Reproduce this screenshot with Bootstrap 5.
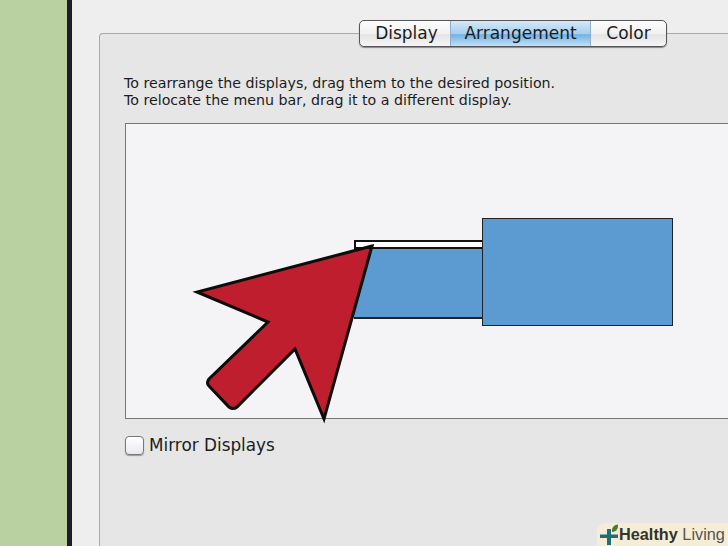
<!DOCTYPE html>
<html lang="en">
<head>
    <meta charset="UTF-8">
    <title>Displays - Arrangement</title>
    <link href="https://cdn.jsdelivr.net/npm/bootstrap@5.3.3/dist/css/bootstrap.min.css" rel="stylesheet">
    <style>
        html, body { height: 100%; overflow: hidden; }
        body { background: #b9d1a0; font-family: "DejaVu Sans", sans-serif; color: #1c1c20; }
        .shot { width: 728px; height: 546px; overflow: hidden; position: relative; }
        .green-side { width: 67px; background: #b9d1a0; }
        .dark-edge { width: 5px; background: #1f1b2a; }
        .prefs-window { width: 900px; background: #eeeeef; padding: 33px 0 0 27px; }
        .prefs-panel { background: #e6e6e7; border: 1px solid #a9a9a9; border-bottom: 0; border-right: 0; border-radius: 4px 0 0 0; height: 600px; padding-left: 24px; }
        .seg-tabs { width: 308px; height: 27px; margin: -14px 0 0 235px; border: 1px solid #55555a; border-radius: 5px; background: linear-gradient(#fdfdfd, #f1f1f1 50%, #e4e4e4 55%, #f6f6f6); box-shadow: 0 1px 1px #888; overflow: hidden; font-size: 17px; line-height: 25px; }
        .seg-tabs > div { text-align: center; }
        .seg-display { width: 90px; padding-left: 3px; }
        .seg-arrange { width: 141px; background: linear-gradient(#d6e8f6, #a6cff0 50%, #72b2e4 55%, #c2e0f6); border-left: 1px solid #8fb0cc; border-right: 1px solid #8fb0cc; }
        .seg-color { flex: 1; }
        .hint-text { margin: 28px 0 0 0; font-size: 14.2px; line-height: 17px; height: 36px; white-space: nowrap; }
        .arrange-canvas { position: relative; width: 700px; height: 296px; margin: 12px 0 0 1px; background: #f4f4f6; border: 1px solid #77777a; }
        .menu-strip { position: absolute; left: 228px; top: 116px; width: 129px; height: 9px; background: #fff; border: 2px solid #111; border-right: 0; }
        .screen-small, .screen-big { position: absolute; background: #5c9bd1; border: 1px solid #222; }
        .screen-small { left: 228px; top: 123px; width: 129px; height: 72px; border-width: 2px 0 2px 0; }
        .screen-big { left: 356px; top: 94px; width: 191px; height: 108px; }
        .mirror-row { margin: 16px 0 0 0; font-size: 16.85px; line-height: 20px; gap: 5px; }
        .mirror-box { width: 19px; height: 19px; margin-left: 1px; border: 1px solid #77777c; border-radius: 4px; background: linear-gradient(#fff, #e8eaf0); box-shadow: 0 1px 1px #999; }
        .big-arrow { position: absolute; left: 0; top: 0; }
        .hl-badge { position: absolute; right: 0; bottom: 0; width: 131px; height: 23px; background: #f6edd6; border-radius: 9px 0 0 0; padding-left: 2px; font-family: "Liberation Sans", sans-serif; font-size: 16.3px; line-height: 23px; color: #3a3a38; white-space: nowrap; }
        .hl-badge b { color: #33332f; }
        .hl-badge span { color: #55554f; }
    </style>
</head>
<body>
    <div class="shot d-flex">
        <div class="green-side flex-shrink-0"></div>
        <div class="dark-edge flex-shrink-0"></div>
        <div class="prefs-window flex-shrink-0">
            <div class="prefs-panel">
                <div class="seg-tabs d-flex">
                    <div class="seg-display">Display</div>
                    <div class="seg-arrange">Arrangement</div>
                    <div class="seg-color">Color</div>
                </div>
                <p class="hint-text">To rearrange the displays, drag them to the desired position.<br>To relocate the menu bar, drag it to a different display.</p>
                <div class="arrange-canvas">
                    <div class="screen-small"></div>
                    <div class="menu-strip"></div>
                    <div class="screen-big"></div>
                </div>
                <div class="mirror-row d-flex align-items-center">
                    <div class="mirror-box"></div>
                    <div>Mirror Displays</div>
                </div>
            </div>
        </div>

        <!-- arrow lies over the window -->
        <svg class="big-arrow" width="728" height="546" viewBox="0 0 728 546">
            <path d="M372 246 L197 292 L268 322 L209 379 Q206 383 209 386 L229 407 Q233 410 237 407 L295 349 L324 419 Z" fill="#be1e2d" stroke="#0c0c0c" stroke-width="3" stroke-linejoin="miter"/>
        </svg>

        <div class="hl-badge d-flex align-items-center">
            <svg width="20" height="22" viewBox="0 0 20 22" class="flex-shrink-0">
                <path d="M8 5h4v5.500h7v3.500h-7v7h-4v-7h-7v-3.500h7z" fill="#1f6f74"/>
                <path d="M13 8c-.5-4 1.500-7 6-7.500 .5 4.500-2 7.500-6 7.500z" fill="#4c7a35"/>
            </svg>
            <div><b>Healthy</b> <span>Living</span></div>
        </div>
    </div>
    <script src="https://cdn.jsdelivr.net/npm/bootstrap@5.3.3/dist/js/bootstrap.bundle.min.js"></script>
</body>
</html>
